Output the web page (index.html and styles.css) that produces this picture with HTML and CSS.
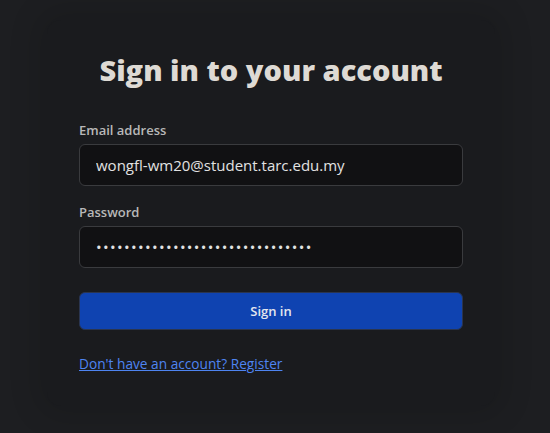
FILE: index.html
```html
<!DOCTYPE html>
<html lang="en">
<head>
<meta charset="utf-8">
<title>Sign in</title>
<link rel="stylesheet" href="styles.css">
</head>
<body>
<main class="page">
  <section class="card">
    <h1 class="title">Sign in to your account</h1>
    <form class="form">
      <div class="field">
        <label class="label" for="email">Email address</label>
        <input class="input" id="email" type="email" value="wongfl-wm20@student.tarc.edu.my">
      </div>
      <div class="field">
        <label class="label" for="pw">Password</label>
        <input class="input input-pw" id="pw" type="password" value="abcdefghijabcdefghijabcdefghija">
      </div>
      <button class="btn" type="button">Sign in</button>
      <a class="link" href="#">Don't have an account? Register</a>
    </form>
  </section>
</main>
</body>
</html>
```
FILE: styles.css
```css
* { box-sizing: border-box; }
html, body { margin: 0; height: 100%; }
body {
  background: #1d1e21;
  font-family: "Open Sans", "Noto Sans", sans-serif;
  color: #e2e2e2;
}
.page {
  display: flex;
  justify-content: flex-start;
  padding: 20px 0 0 47px;
}
.card {
  width: 448px;
  background: #1a1b1e;
  border-radius: 14px;
  padding: 32px;
  box-shadow: 0 0 30px 10px rgba(0,0,0,0.12);
}
.title {
  margin: 0;
  font-size: 29px;
  line-height: 36px;
  font-weight: 800;
  text-align: center;
  color: #dedad4;
  letter-spacing: 0;
}
.form {
  margin-top: 32px;
  display: flex;
  flex-direction: column;
}
.field {
  display: flex;
  flex-direction: column;
  gap: 4px;
  margin-bottom: 16px;
}
.field + .field { margin-bottom: 24px; }
.label {
  font-size: 13px;
  line-height: 20px;
  font-weight: 600;
  color: #b8b8b8;
}
.input {
  height: 42px;
  width: 100%;
  background: #111113;
  border: 1px solid #3a3b3e;
  border-radius: 6px;
  padding: 0 16px;
  font-family: "Open Sans", "Noto Sans", sans-serif;
  font-size: 15px;
  color: #e2e2e2;
  outline: none;
}
.input-pw { letter-spacing: 1.35px; }
.btn {
  height: 38px;
  width: 100%;
  background: #0f43b1;
  border: 1px solid #2a3550;
  border-radius: 6px;
  font-family: "Open Sans", "Noto Sans", sans-serif;
  font-size: 13px;
  font-weight: 600;
  color: #e4e6ee;
  cursor: pointer;
}
.link {
  margin-top: 24px;
  font-size: 13.7px;
  line-height: 20px;
  color: #4e84f1;
  text-decoration: underline;
  align-self: flex-start;
}
```
